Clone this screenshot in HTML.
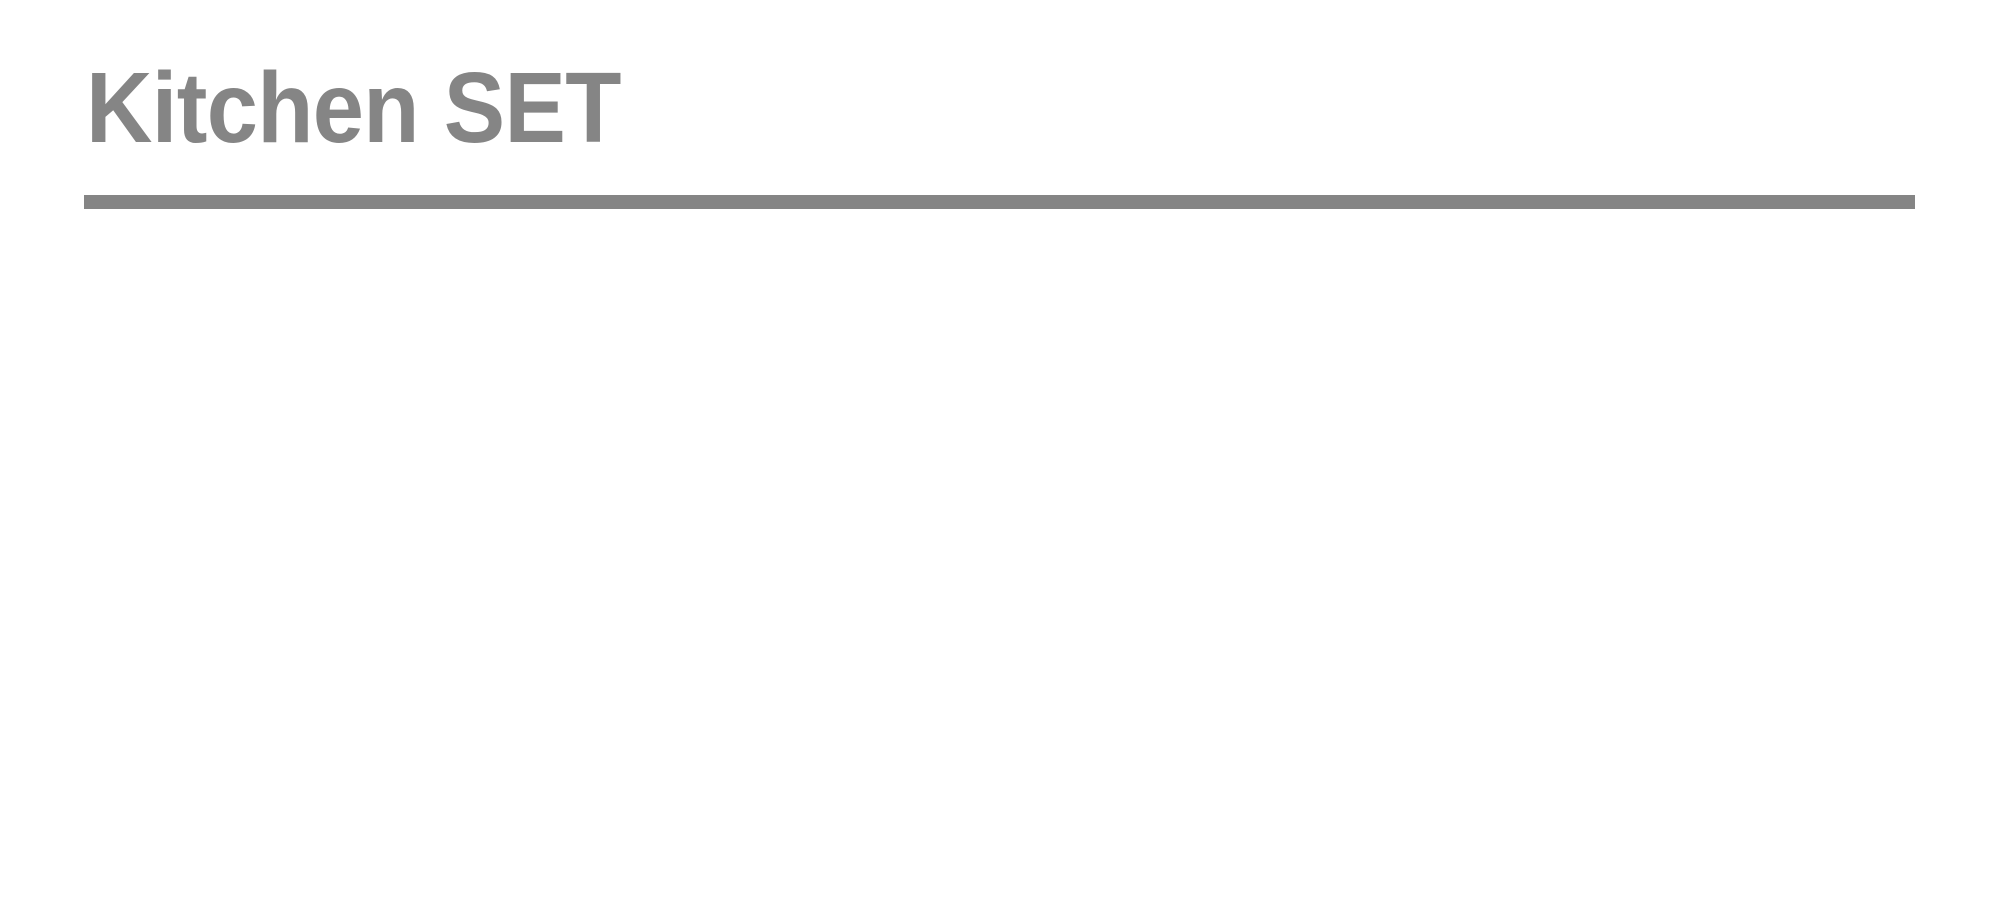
<!DOCTYPE html>
<html><head><meta charset="utf-8"><style>
html,body{margin:0;padding:0;background:#fff;width:2000px;height:900px;overflow:hidden;position:relative}
.t{position:absolute;left:86px;top:48px;font-family:"Liberation Sans",sans-serif;font-weight:bold;font-size:100px;line-height:120px;color:#858585;letter-spacing:-0.7px;white-space:nowrap;transform-origin:left top;transform:scaleX(0.92)}
.r{position:absolute;left:84px;top:195px;width:1831px;height:14px;background:#858585}
</style></head><body>
<div class="t">Kitchen SET</div>
<div class="r"></div>
</body></html>
